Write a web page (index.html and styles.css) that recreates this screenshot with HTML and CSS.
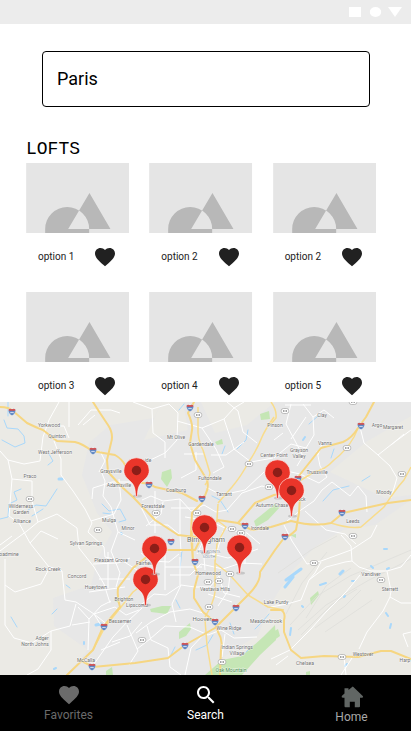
FILE: index.html
```html
<!DOCTYPE html>
<html lang="en">
<head>
<meta charset="utf-8">
<meta name="viewport" content="width=device-width, initial-scale=1">
<title>Lofts</title>
<link rel="stylesheet" href="styles.css">
</head>
<body>
<svg class="defs" aria-hidden="true">
  <symbol id="heart" viewBox="0 0 24 24"><path d="M12 21.35l-1.45-1.32C5.4 15.36 2 12.28 2 8.5 2 5.42 4.42 3 7.5 3c1.74 0 3.41.81 4.5 2.09C13.09 3.81 14.76 3 16.5 3 19.58 3 22 5.42 22 8.5c0 3.78-3.4 6.86-8.55 11.54L12 21.35z"/></symbol>
  <symbol id="photo" viewBox="0 0 103 70">
    <path fill="#e5e5e5" d="M0 0h103v70H0z"/>
    <path fill="#b8b8b8" fill-rule="evenodd" d="M19 70V66A22 22 0 0 1 63 66V70ZM63.300 30L84.300 66H42Z"/>
  </symbol>
</svg>

<header class="status">
  <svg width="54" height="10" viewBox="0 0 54 10" fill="#fff" aria-hidden="true"><path d="M0 0h12v10H0zM39 0h14l-7 10z"/><ellipse cx="26.500" cy="5" rx="5.700" ry="5"/></svg>
</header>

<main class="main">
  <form class="search-form"><input class="search-box" type="text" value="Paris" aria-label="Destination"></form>
  <h1 class="title">LOFTS</h1>
  <section class="grid">
    <article class="card"><svg class="photo"><use href="#photo"/></svg><div class="caption"><span>option 1</span><button class="like" aria-label="Like option 1"><svg><use href="#heart"/></svg></button></div></article>
    <article class="card"><svg class="photo"><use href="#photo"/></svg><div class="caption"><span>option 2</span><button class="like" aria-label="Like option 2"><svg><use href="#heart"/></svg></button></div></article>
    <article class="card"><svg class="photo"><use href="#photo"/></svg><div class="caption"><span>option 2</span><button class="like" aria-label="Like option 2"><svg><use href="#heart"/></svg></button></div></article>
    <article class="card"><svg class="photo"><use href="#photo"/></svg><div class="caption"><span>option 3</span><button class="like" aria-label="Like option 3"><svg><use href="#heart"/></svg></button></div></article>
    <article class="card"><svg class="photo"><use href="#photo"/></svg><div class="caption"><span>option 4</span><button class="like" aria-label="Like option 4"><svg><use href="#heart"/></svg></button></div></article>
    <article class="card"><svg class="photo"><use href="#photo"/></svg><div class="caption"><span>option 5</span><button class="like" aria-label="Like option 5"><svg><use href="#heart"/></svg></button></div></article>
  </section>
</main>

<svg class="map" viewBox="0 402 411 273" preserveAspectRatio="xMidYMid slice" role="img" aria-label="Map">
  <defs>
    <g id="pin">
      <ellipse cx="1" cy="25.500" rx="4.500" ry="1.600" fill="#8a8a8a" opacity=".35"/>
      <path d="M-.8 26C-1.200 20-1.500 16-4.500 12.500C-7.500 9-12.700 6.500-12.700 0A12.700 12.700 0 0 1 12.700 0C12.700 6.500 7.500 9 4.500 12.500C1.500 16 1.200 20 .8 26Z" fill="#ea352a" stroke="#fff" stroke-opacity=".7" stroke-width=".8"/>
      <circle r="4.700" fill="#8c1e18"/>
    </g>
    <g id="shield"><path d="M-3.300-2.500L-2-3.300 0-2.800 2-3.300 3.300-2.500Q4.200 1.500 0 3.500Q-4.200 1.500-3.300-2.500Z" fill="#4673b8" stroke="#fff" stroke-width=".4"/><path d="M-3.300-2.600L-2-3.300 0-2.800 2-3.300 3.300-2.600V-1.300H-3.300Z" fill="#d9534f"/><path d="M-1.800 .5H1.800" stroke="#c9d6ee" stroke-width="1.500"/></g>
    <g id="route"><rect x="-3.800" y="-2.500" width="7.600" height="5" rx="2.300" fill="#fff" stroke="#999" stroke-width=".6"/><path d="M-2 0H2" stroke="#888" stroke-width="1.500" stroke-dasharray="1 .5"/></g>
  </defs>
  <path fill="#ebeae5" d="M0 402H411V675H0Z"/>
  <g fill="#e7e7e7">
    <path d="M89 443L110 425 154 418 162 402H411V500L375 525 343 530 315 547 291 572 272 602 258 635 219 660 207 675H66L88 650 54 626 53 598 91 585 98 558 112 532 97 513 82 475Z"/>
  </g>
  <path fill="#ebeae5" d="M162 402L144 440 188 430 183 402ZM275 402L247 425 215 433 201 402ZM330 472L366 442 411 416V495L385 498Z"/>
  <g fill="#c5e6b5">
    <path d="M162 472L171 469 172 478 167 487 161 479ZM260 414L269 411 270 419 261 420ZM215 442L222 439 223 444 217 445Z"/>
    <path d="M254 521L275 504 280 507 268 520 256 527Z"/>
    <path d="M150 609L162 606 171 606 167 614 151 612ZM179 632L190 623 191 629 186 636 179 639Z"/>
    <path d="M205 675L222 660 242 656 263 637 275 625 276 640 260 655 242 675Z"/>
    <path d="M310 598L318 591 319 595 311 605ZM271 633L278 629 280 636 273 641ZM106 671L112 667 113 675H106ZM114 601L119 599 120 603ZM290 535L296 534 296 538Z"/>
    <path d="M306 672L310 671V675H306Z"/>
  </g>
  <g fill="none" stroke="#dededa" stroke-width=".8">
    <path d="M290 625L317 596 350 576 411 550M298 630L326 605 369 580 411 559M301 635L331 605 357 589M315 628L345 606 361 590M325 632L350 615 372 600M327 552L302 583 286 614M351 568L326 586 306 618M278 573L311 550 337 536"/>
  </g>
  <g fill="none" stroke="#a9d8fb" stroke-linecap="round">
    <path d="M4 420L7 428 18 429 24 436 25 443 15 447 2 440M8 402V416" />
    <path d="M0 519L8 517 9 504 17 500 14 492 21 489M28 510L36 505 46 506 57 489M32 516L43 509" />
    <path d="M49 454L53 461 48 465M102 504L109 511 120 509 126 520 119 522M103 513L111 514"/>
    <path d="M212 496L220 500 228 512M237 449L246 440 248 430M179 410L184 404M309 424L318 416M222 454L225 446M323 501L333 490 349 486M331 458L334 449M362 481L370 476"/>
    <path d="M196 650L207 645 213 635M171 655L175 647M182 550L180 568M255 629L263 621 269 614M66 585L70 588M11 617L17 627M52 614L57 609M230 623L234 634M176 600L180 608M246 652L252 646"/>
    <path stroke-width="3" d="M286 580L301 569M285 587L293 577M340 574L343 571M59 479L62 479M96 625L101 624"/>
    <path stroke-width="2" d="M320 585L326 583M387 569L389 568M352 581L354 581M371 566L373 568M386 613L388 616M291 628L290 635M302 606L303 607M391 624L390 628M303 440L305 437M384 549L387 549M344 597L345 596M121 533L122 534M345 666L347 664M84 642V644M54 669L56 668"/>
  </g>
  <g fill="none" stroke="#fff" stroke-width="1" stroke-linejoin="round">
    <path d="M0 451L8 460 24 464 40 461 43 437 49 420 59 402M8 460L12 479 9 516 19 523 30 543 49 567 62 571 65 600 76 602 94 614 104 630M12 479L32 481 32 501 38 522 27 531 16 539 0 551"/>
    <path d="M54 441L61 459 61 475 73 491 85 509 92 523 88 532 104 547 105 557 123 561 137 570M49 426L64 426 69 438M69 427V402M78 425L91 410 111 410 120 413M95 415L83 425"/>
    <path d="M38 522L57 514 77 528 79 548 94 567 104 584 110 603M30 543L41 531 58 539M0 545L12 536M5 559V585L15 592 41 584 50 567 62 571M5 585L5 625 14 638 32 643 51 631 70 626 76 604M51 631V650L38 669 27 675M88 650L89 619 78 607M89 619L101 606 111 601M94 614L115 607 126 615 139 610M94 614L108 625M72 625L90 622"/>
    <path d="M92 499L93 488 112 482 131 482M101 471L105 481 103 496 111 507 118 532 135 540M100 451L105 461 99 472M119 479L121 500 114 514 91 521M118 532L111 551 120 573 116 587M93 564L118 563 130 558M108 552V588M99 579H130M89 592L125 587"/>
    <path d="M133 402L152 409 169 404 178 413 177 440 165 453 144 463 138 471M152 409L153 433 165 442 165 458M177 421L202 428 224 419 234 408 244 402M202 428L216 449 224 467 213 473M224 419L234 449 251 462 273 458M227 402L238 411 243 432 257 443M244 442L226 455 211 455M181 478L196 470 196 452M184 454H205"/>
    <path d="M142 500L151 496 163 501 180 499 191 511 204 505 216 512 227 510 242 493 262 486 274 489M141 507L150 525 168 525 180 535 181 552M163 502L161 514 146 526M180 499V535M155 491V533M171 508H200M185 517L210 521 229 530 247 533 260 544M206 487L221 495 245 490 264 472 274 473"/>
    <path d="M274 458L291 444 306 448 314 435 313 417 303 404M291 404L286 424 294 439 303 456 297 466M283 433L274 440M273 468L300 474 319 483 327 477 320 466 317 451M291 439L306 417M313 417L324 410 334 418M323 441L318 455"/>
    <path d="M284 525L292 541 307 564 321 561 351 550 371 537 377 525M287 521L301 510 314 501 322 490 332 482 350 496 358 486 366 496 367 512M305 511L326 530 345 534 356 544M360 427L364 443 378 455 392 444 411 430M378 455L390 466 397 478 391 498M391 445L404 434"/>
    <path d="M271 607L287 604 301 600 309 580 326 567 345 562 352 561 351 546 341 535M309 580L315 573 321 562M352 561L359 567 371 571 387 571 391 591 390 597 383 611 367 632 359 649M390 597L401 603 411 603M387 571L401 567 411 555M411 632L403 634 408 647M344 657L346 675M352 658L341 675M271 659L290 650 311 629 326 612 346 592 360 575"/>
    <path d="M141 553L151 561 169 562 179 554M142 604L154 594 166 595 181 585 195 587 210 587 219 576M136 633L151 622 170 612 190 609 203 613M147 626L151 640 168 648 170 667 181 675M137 649L150 639 165 626 190 627 208 635 221 630 234 638 257 637M170 575L190 575 201 564 223 569 241 563 262 564M181 585L172 604 176 622M219 576L224 593 240 597M218 606L228 591 230 575M180 557V585M165 550V590M165 567H202M212 554L228 558 247 553 258 549M208 594L232 602M205 633L191 648 185 675M225 634L222 657"/>
    <path d="M94 664L113 637 128 621 142 608M112 642L130 636 142 622M127 625L138 651 129 665M101 650L120 642M276 665L288 656M311 405H285M203 545L205 570M197 554L206 535 202 520M245 533V564M236 535V558M223 531L215 558"/>
  </g>
  <g fill="none" stroke="#f8dc8c" stroke-width="1.500" stroke-linejoin="round">
    <path d="M218 504L217 520M274 417Q265 430 262 437Q257 450 248 463Q242 475 232 487L218 503M198 407V433Q199 443 203 450L210 473Q209 480 205 485"/>
    <path d="M358 428L354 437Q346 451 334 460Q325 470 314 472L298 482M331 523Q350 529 361 527L384 507Q395 490 404 480L411 467M271 402Q277 410 276 418L271 424"/>
    <path d="M93 650L105 627 117 612 133 592 145 583M215 560V592Q214 602 205 617M205 620L207 645 212 675M215 563L228 573 248 595 268 607 284 610M192 523L193 562M217 520L226 527 217 544 215 563"/>
  </g>
  <g fill="none" stroke="#f6d682" stroke-width="2" stroke-linejoin="round" stroke-linecap="round">
    <path d="M0 407Q9 407 13 411L27 423Q35 427 43 430L57 441 75 442Q83 444 92 451L115 455Q122 459 125 465M93 402L100 413 108 425Q114 434 111 443L107 460 108 472 122 487 133 497 155 520 178 535 196 537"/>
    <path d="M194 402L188 413Q193 424 192 430L190 443 195 460 207 480Q209 487 206 493L202 503 192 513 191 535 193 562 198 575 194 590 194 598 203 612 215 622 218 632Q223 640 221 648L220 675M142 483Q149 483 155 487L182 493 197 501"/>
    <path d="M374 402L366 417 358 428Q352 438 343 442L321 448 298 477 289 492 274 495 255 503 238 523 218 520 201 538 195 550 155 550 133 568 118 588Q117 599 120 607L103 627 93 650 67 675"/>
    <path d="M238 523L252 530 271 527 291 521Q314 527 331 523L343 513 388 503 411 500M300 497L299 513 296 530Q289 537 284 538L275 550 260 572Q261 582 248 595L235 608 215 628 185 645 168 658 135 663 93 667 80 660"/>
    <path d="M271 610H281Q286 613 284 620V632L291 650 301 658 324 656 358 657 381 651H391L411 659"/>
  </g>
  <g>
    <use href="#shield" x="12" y="412"/><use href="#shield" x="93" y="451"/><use href="#shield" x="190" y="408"/><use href="#shield" x="149" y="485"/><use href="#shield" x="202" y="499"/><use href="#shield" x="361" y="426"/><use href="#shield" x="245" y="526"/><use href="#shield" x="342" y="513"/><use href="#shield" x="285" y="537"/><use href="#shield" x="298" y="479"/><use href="#shield" x="104" y="627"/><use href="#shield" x="92" y="667"/><use href="#shield" x="171" y="542"/><use href="#shield" x="195" y="562"/><use href="#shield" x="236" y="608"/><use href="#shield" x="215" y="622"/><use href="#shield" x="185" y="646"/>
    <use href="#route" x="30" y="499"/><use href="#route" x="98" y="530"/><use href="#route" x="198" y="415"/><use href="#route" x="249" y="464"/><use href="#route" x="156" y="513"/><use href="#route" x="197" y="513"/><use href="#route" x="232" y="529"/><use href="#route" x="241" y="533"/><use href="#route" x="285" y="411"/><use href="#route" x="347" y="448"/><use href="#route" x="402" y="474"/><use href="#route" x="353" y="536"/><use href="#route" x="269" y="487"/><use href="#route" x="314" y="563"/><use href="#route" x="381" y="580"/><use href="#route" x="342" y="657"/><use href="#route" x="208" y="582"/><use href="#route" x="219" y="581"/><use href="#route" x="230" y="574"/><use href="#route" x="209" y="607"/><use href="#route" x="142" y="640"/><use href="#route" x="222" y="662"/><use href="#route" x="353" y="402"/>
  </g>
  <g class="places">
    <text x="49" y="427">Yorkwood</text><text x="57" y="438">Quinton</text><text x="55" y="454">West Jefferson</text><text x="30" y="478">Praco</text><text x="111" y="473">Graysville</text><text x="119" y="487">Adamsville</text><text x="21" y="508">Wilderness</text><text x="21" y="514">Garden</text><text x="22" y="523">Alliance</text><text x="109" y="522">Mulga</text><text x="128" y="530">Minor</text>
    <text x="176" y="439">Mt Olive</text><text x="201" y="446">Gardendale</text><text x="148" y="462">ide</text><text x="210" y="480">Fultondale</text><text x="176" y="492">Coalburg</text><text x="224" y="496">Tarrant</text><text x="153" y="508">Forestdale</text><text x="260" y="530">Irondale</text>
    <text x="275" y="427">Pinson</text><text x="322" y="417">Clay</text><text x="377" y="427">Argo</text><text x="393" y="429">Margaret</text><text x="299" y="452">Grayson</text><text x="299" y="458">Valley</text><text x="274" y="457">Center Point</text><text x="325" y="445">Vanns</text><text x="317" y="474">Trussville</text><text x="384" y="494">Moody</text><text x="353" y="523">Leeds</text><text x="296" y="501">Roebuck</text><text x="272" y="507">Autumn Chase</text>
    <text x="86" y="545">Sylvan Springs</text><text x="9" y="556">oadmine</text><text x="111" y="562">Pleasant Grove</text><text x="48" y="571">Rock Creek</text><text x="77" y="578">Concord</text><text x="96" y="589">Hueytown</text><text x="124" y="601">Brighton</text><text x="137" y="607">Lipscomb</text><text x="120" y="623">Bessemer</text><text x="42" y="640">Adger</text><text x="35" y="646">North Johns</text><text x="86" y="662">McCalla</text><text x="145" y="565">Fairfield</text>
    <text x="208" y="575">Homewood</text><text x="215" y="591">Vestavia Hills</text><text class="town" x="202" y="621">Hoover</text><text x="229" y="630">Wine Ridge</text><text x="237" y="649">Indian Springs</text><text x="237" y="655">Village</text><text x="266" y="623">Meadowbrook</text><text x="276" y="604">Lake Purdy</text><text x="371" y="576">Vandiver</text><text x="390" y="591">Sterrett</text><text x="363" y="656">Westover</text><text x="305" y="665">Chelsea</text><text x="405" y="662">Harp</text>
    <text class="city" x="206" y="542">Birmingham</text><text class="area" x="209" y="553">FIVE POINTS</text><text class="area" x="209" y="558">SOUTH</text><text class="park" x="231" y="672">Oak Mountain</text>
  </g>
  <use href="#pin" x="136.500" y="470.500"/><use href="#pin" x="277.500" y="472.500"/><use href="#pin" x="291.500" y="490.500"/><use href="#pin" x="204.500" y="527.500"/><use href="#pin" x="239.500" y="547.500"/><use href="#pin" x="145.500" y="579.500"/><use href="#pin" x="154.500" y="548.500"/>
</svg>

<nav class="nav">
  <a class="nav-item" href="#favorites"><svg viewBox="0 0 24 24"><use href="#heart"/></svg>Favorites</a>
  <a class="nav-item nav-active" href="#search"><svg viewBox="0 0 24 24"><path d="M15.500 14h-.79l-.28-.27C15.410 12.590 16 11.110 16 9.500 16 5.910 13.090 3 9.500 3S3 5.910 3 9.500 5.910 16 9.500 16c1.610 0 3.090-.59 4.230-1.570l.27.28v.79l5 4.990L20.490 19l-4.990-5zm-6 0C7.010 14 5 11.990 5 9.500S7.010 5 9.500 5 14 7.010 14 9.500 11.990 14 9.500 14z"/></svg>Search</a>
  <a class="nav-item nav-home" href="#home"><svg viewBox="0 0 24 24"><path fill="#616664" d="M12.400 1.700L8.500 5V3.200H4.500V8.500L2 10.700Q1 12.500 3 12.700H4.500V21.300Q4.500 22.300 5.500 22.300H9.800V16.800H14.800V22.300H19Q20 22.300 20 21.300V12.700H21.800Q24 12.500 22.500 10.700L13.400 2Q12.900 1.400 12.400 1.700Z"/></svg>Home</a>
</nav>
</body>
</html>
```
FILE: styles.css
```css
* { box-sizing: border-box; }

body {
  margin: 0;
  min-height: 100vh;
  display: flex;
  flex-direction: column;
  background: #fff;
  color: #000;
  font-family: Roboto, "Liberation Sans", sans-serif;
}

.defs { display: none; }

.status {
  height: 24px;
  padding-right: 8px;
  display: flex;
  align-items: center;
  justify-content: flex-end;
  background: #ececec;
}

.main { padding: 27px 35px 0 26px; }

.search-form { padding: 0 6px 0 16px; }

.search-box {
  display: block;
  width: 100%;
  height: 56px;
  padding: 0 14px 2px;
  border: 1px solid #000;
  border-radius: 4px;
  background: #fff;
  color: #000;
  font: 18px Roboto, sans-serif;
}

.title {
  margin: 30px 0 2px;
  font: 18px/24px "Liberation Mono", monospace;
}

.grid {
  display: grid;
  grid-template-columns: repeat(3, 1fr);
  column-gap: 20px;
  row-gap: 23px;
  padding-bottom: 4px;
}

.photo {
  display: block;
  width: 100%;
  height: 70px;
}

.caption {
  display: flex;
  align-items: center;
  justify-content: space-between;
  padding: 12px 12px 0;
  color: #212121;
  font-size: 10px;
  line-height: 24px;
}

.like {
  width: 24px;
  height: 24px;
  padding: 0;
  border: 0;
  background: none;
}

.like svg {
  display: block;
  width: 24px;
  height: 24px;
  fill: #212121;
}

.map {
  display: block;
  width: 100%;
  flex: 1 0 auto;
  aspect-ratio: 411 / 273;
}

.places {
  fill: #707070;
  font-size: 5px;
  text-anchor: middle;
  stroke: #fff;
  stroke-opacity: .6;
  stroke-width: 1px;
  paint-order: stroke;
}

.places .town { font-size: 6px; }
.places .city { font-size: 7px; }
.places .area { font-size: 4px; fill: #8190a0; }
.places .park { fill: #4d8c56; }

.nav {
  display: grid;
  grid-template-columns: repeat(3, 1fr);
  height: 56px;
  background: #000;
}

.nav-item {
  display: flex;
  flex-direction: column;
  align-items: center;
  padding-top: 8px;
  color: #6b6b6b;
  font-size: 12px;
  line-height: 16px;
  text-decoration: none;
}

.nav-item svg {
  width: 24px;
  height: 24px;
  fill: currentColor;
}

.nav-active { color: #fff; }

.nav-home {
  padding: 10px 0 0 18px;
  color: #a8a8a8;
}
```
